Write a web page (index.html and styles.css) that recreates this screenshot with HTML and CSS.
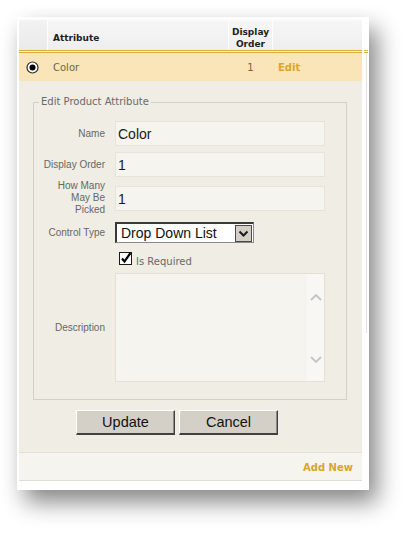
FILE: index.html
```html
<!DOCTYPE html>
<html>
<head>
<meta charset="utf-8">
<link rel="stylesheet" href="styles.css">
</head>
<body>
<div class="card">
  <div class="panel">
    <div class="ghead">
      <div class="c1"></div>
      <div class="c2 hattr">Attribute</div>
      <div class="c3 horder">Display<br>Order</div>
      <div class="c4"></div>
    </div>
    <div class="grow">
      <div class="c1 radio-cell">
        <svg width="13" height="13" viewBox="0 0 13 13"><circle cx="6.5" cy="6.5" r="5.5" fill="#fff" stroke="#2a2a2a" stroke-width="1.2"/><circle cx="6.5" cy="6.5" r="3" fill="#000"/></svg>
      </div>
      <div class="c2 rtext">Color</div>
      <div class="c3 rtext rnum">1</div>
      <div class="c4 redit">Edit</div>
    </div>
    <div class="edit">
      <fieldset class="fs">
        <legend class="lg">Edit Product Attribute</legend>
        <div class="frow r1">
          <div class="lbl">Name</div>
          <div class="inp">Color</div>
        </div>
        <div class="frow r2">
          <div class="lbl">Display Order</div>
          <div class="inp">1</div>
        </div>
        <div class="frow r3">
          <div class="lbl">How Many<br>May Be<br>Picked</div>
          <div class="inp">1</div>
        </div>
        <div class="frow r4">
          <div class="lbl">Control Type</div>
          <div class="sel"><span class="seltext">Drop Down List</span><span class="selbtn"><svg width="15" height="15" viewBox="0 0 15 15"><path d="M3.5 5.5 L7.5 9.5 L11.5 5.5" fill="none" stroke="#1a1a1a" stroke-width="2"/></svg></span></div>
        </div>
        <div class="frow r5">
          <div class="lbl"></div>
          <div class="chk"><svg width="14" height="14" viewBox="0 0 14 14"><rect x="0.5" y="1.5" width="12" height="12" fill="#fff" stroke="#1a1a1a"/><path d="M3 7.5 L5.5 10.5 L11.5 2" fill="none" stroke="#000" stroke-width="2.2"/></svg><span class="chktext">Is Required</span></div>
        </div>
        <div class="frow r6">
          <div class="lbl">Description</div>
          <div class="ta"><div class="tamain"></div><div class="tasb"><svg width="12" height="8" viewBox="0 0 12 8"><path d="M1 7 L6 2 L11 7" fill="none" stroke="#c4c4c4" stroke-width="1.8"/></svg><svg width="12" height="8" viewBox="0 0 12 8"><path d="M1 1 L6 6 L11 1" fill="none" stroke="#c4c4c4" stroke-width="1.8"/></svg></div></div>
        </div>
      </fieldset>
      <div class="buttons">
        <div class="btn">Update</div>
        <div class="btn">Cancel</div>
      </div>
    </div>
    <div class="footer"><span class="addnew">Add New</span></div>
  </div>
  <div class="rail"><div class="railgold"></div><div class="railline"></div></div>
</div>
</body>
</html>
```

FILE: styles.css
```css
html, body {
  margin: 0;
  padding: 0;
  background: #fff;
}
body {
  width: 417px;
  height: 538px;
  overflow: hidden;
  font-family: "DejaVu Sans", Verdana, sans-serif;
}
.card {
  margin: 17px 0 0 17px;
  width: 352px;
  height: 473px;
  box-sizing: border-box;
  padding: 3px 0 9px 2px;
  background: #fff;
  display: flex;
  box-shadow: 8px 12px 22px rgba(0, 0, 0, 0.48);
}
.panel {
  width: 343px;
  display: flex;
  flex-direction: column;
}
.rail {
  width: 7px;
  display: flex;
  flex-direction: column;
}
.railgold {
  height: 3px;
  margin-top: 30px;
  margin-left: 2px;
  width: 4px;
  border-top: 1px solid #d9b443;
  border-bottom: 1px solid #d9b443;
  box-sizing: border-box;
}
.railline {
  margin-left: 4px;
  width: 1px;
  height: 280px;
  background: #e2e2e2;
}
.ghead, .grow {
  display: flex;
}
.ghead {
  height: 30px;
  background: linear-gradient(#f6f6f6, #eeeeee);
  border-bottom: 3px double #d6ae3e;
}
.c1, .c2, .c3, .c4 {
  box-sizing: border-box;
  flex: none;
}
.c1 { width: 28px; }
.c2 { width: 181px; }
.c3 { width: 44px; }
.c4 { flex: 1; }
.ghead .c2, .ghead .c3, .ghead .c4 {
  border-left: 1px solid #fdfdfd;
}
.ghead .c1 {
  background: linear-gradient(#f2f2f2, #eaeaea);
}
.hattr {
  font-weight: bold;
  font-size: 9px;
  color: #1e1e1e;
  display: flex;
  align-items: flex-end;
  padding: 0 0 7px 5px;
}
.horder {
  font-weight: bold;
  font-size: 9px;
  line-height: 12px;
  color: #1e1e1e;
  text-align: center;
  display: flex;
  align-items: flex-end;
  justify-content: center;
  padding-bottom: 0;
}
.grow {
  height: 28px;
  background: #f9e5b8;
  align-items: center;
}
.radio-cell {
  display: flex;
  justify-content: center;
  align-items: center;
}
.radio-cell svg {
  margin-left: -2px;
  display: block;
}
.grow .c2, .grow .c3, .grow .c4 {
  border-left: 1px solid transparent;
}
.rtext {
  font-size: 10px;
  color: #6f6548;
}
.grow .c2 {
  padding-left: 5px;
}
.rnum {
  text-align: center;
}
.redit {
  font-size: 10px;
  font-weight: bold;
  color: #dba52a;
  padding-left: 5px;
}
.edit {
  flex: 1;
  background: #efede4;
  padding: 15px 0 0 14px;
}
.fs {
  margin: 0;
  padding: 0 0 17px 0;
  width: 314px;
  box-sizing: border-box;
  border: 1px solid #d3d0c6;
  min-inline-size: 0;
}
.lg {
  font-size: 10px;
  line-height: 12px;
  color: #6a6a6a;
  padding: 0 2px;
  margin-left: 5px;
}
.frow {
  display: flex;
  align-items: center;
  column-gap: 10px;
}
.lbl {
  width: 71px;
  text-align: right;
  font-family: "Liberation Sans", Arial, sans-serif;
  font-size: 10px;
  line-height: 12px;
  color: #676767;
  flex: none;
}
.inp {
  width: 210px;
  height: 25px;
  box-sizing: border-box;
  background: #f6f4ef;
  border: 1px solid #e6e3da;
  font-family: "Liberation Sans", Arial, sans-serif;
  font-size: 14px;
  line-height: 24px;
  color: #1a1a1a;
  padding-left: 2px;
}
.r1 { margin-top: 13px; }
.r2 { margin-top: 6px; }
.r3 { margin-top: 3px; }
.r4 { margin-top: 6px; }
.r5 { margin-top: 8px; }
.r6 { margin-top: 8px; }
.sel {
  width: 139px;
  height: 21px;
  box-sizing: border-box;
  background: #fff;
  border: 1px solid #8a8a8a;
  border-left: 2px solid #3a3a3a;
  border-top: 2px solid #3a3a3a;
  display: flex;
  align-items: center;
  justify-content: space-between;
  font-family: "Liberation Sans", Arial, sans-serif;
  font-size: 14px;
  color: #111;
}
.seltext {
  padding-left: 4px;
  line-height: 17px;
}
.selbtn {
  width: 17px;
  height: 17px;
  box-sizing: border-box;
  background: #d4d0c8;
  border: 1px solid #4a4a4a;
  display: flex;
  align-items: center;
  justify-content: center;
  margin-right: 1px;
}
.selbtn svg { display: block; }
.chk {
  display: flex;
  align-items: center;
  margin-left: 4px;
  height: 14px;
}
.chk svg { display: block; }
.chktext {
  font-size: 10px;
  color: #6a6a6a;
  margin-left: 3px;
  padding-top: 6px;
}
.ta {
  width: 210px;
  height: 109px;
  box-sizing: border-box;
  background: #f6f4ef;
  border: 1px solid #e3e0d7;
  display: flex;
}
.tamain { flex: 1; }
.tasb {
  width: 17px;
  background: #f8f7f3;
  display: flex;
  flex-direction: column;
  justify-content: space-between;
  align-items: center;
  padding: 19px 0 17px 0;
  box-sizing: border-box;
}
.tasb svg { display: block; }
.buttons {
  display: flex;
  column-gap: 4px;
  margin: 10px 0 0 43px;
}
.btn {
  width: 99px;
  height: 25px;
  box-sizing: border-box;
  background: #d4d0c8;
  border-top: 1px solid #fff;
  border-left: 1px solid #fff;
  border-right: 1px solid #404040;
  border-bottom: 2px solid #404040;
  box-shadow: inset -1px 0 #8a8a8a;
  font-family: "Liberation Sans", Arial, sans-serif;
  font-size: 14.5px;
  line-height: 22px;
  text-align: center;
  color: #111;
}
.footer {
  height: 29px;
  box-sizing: border-box;
  background: #f6f4ef;
  border-top: 1px solid #e2dfd6;
  border-bottom: 1px solid #e2dfd6;
  display: flex;
  align-items: center;
  justify-content: flex-end;
  padding-right: 9px;
}
.addnew {
  font-size: 10px;
  font-weight: bold;
  color: #dba52a;
  padding-top: 1px;
}
```
